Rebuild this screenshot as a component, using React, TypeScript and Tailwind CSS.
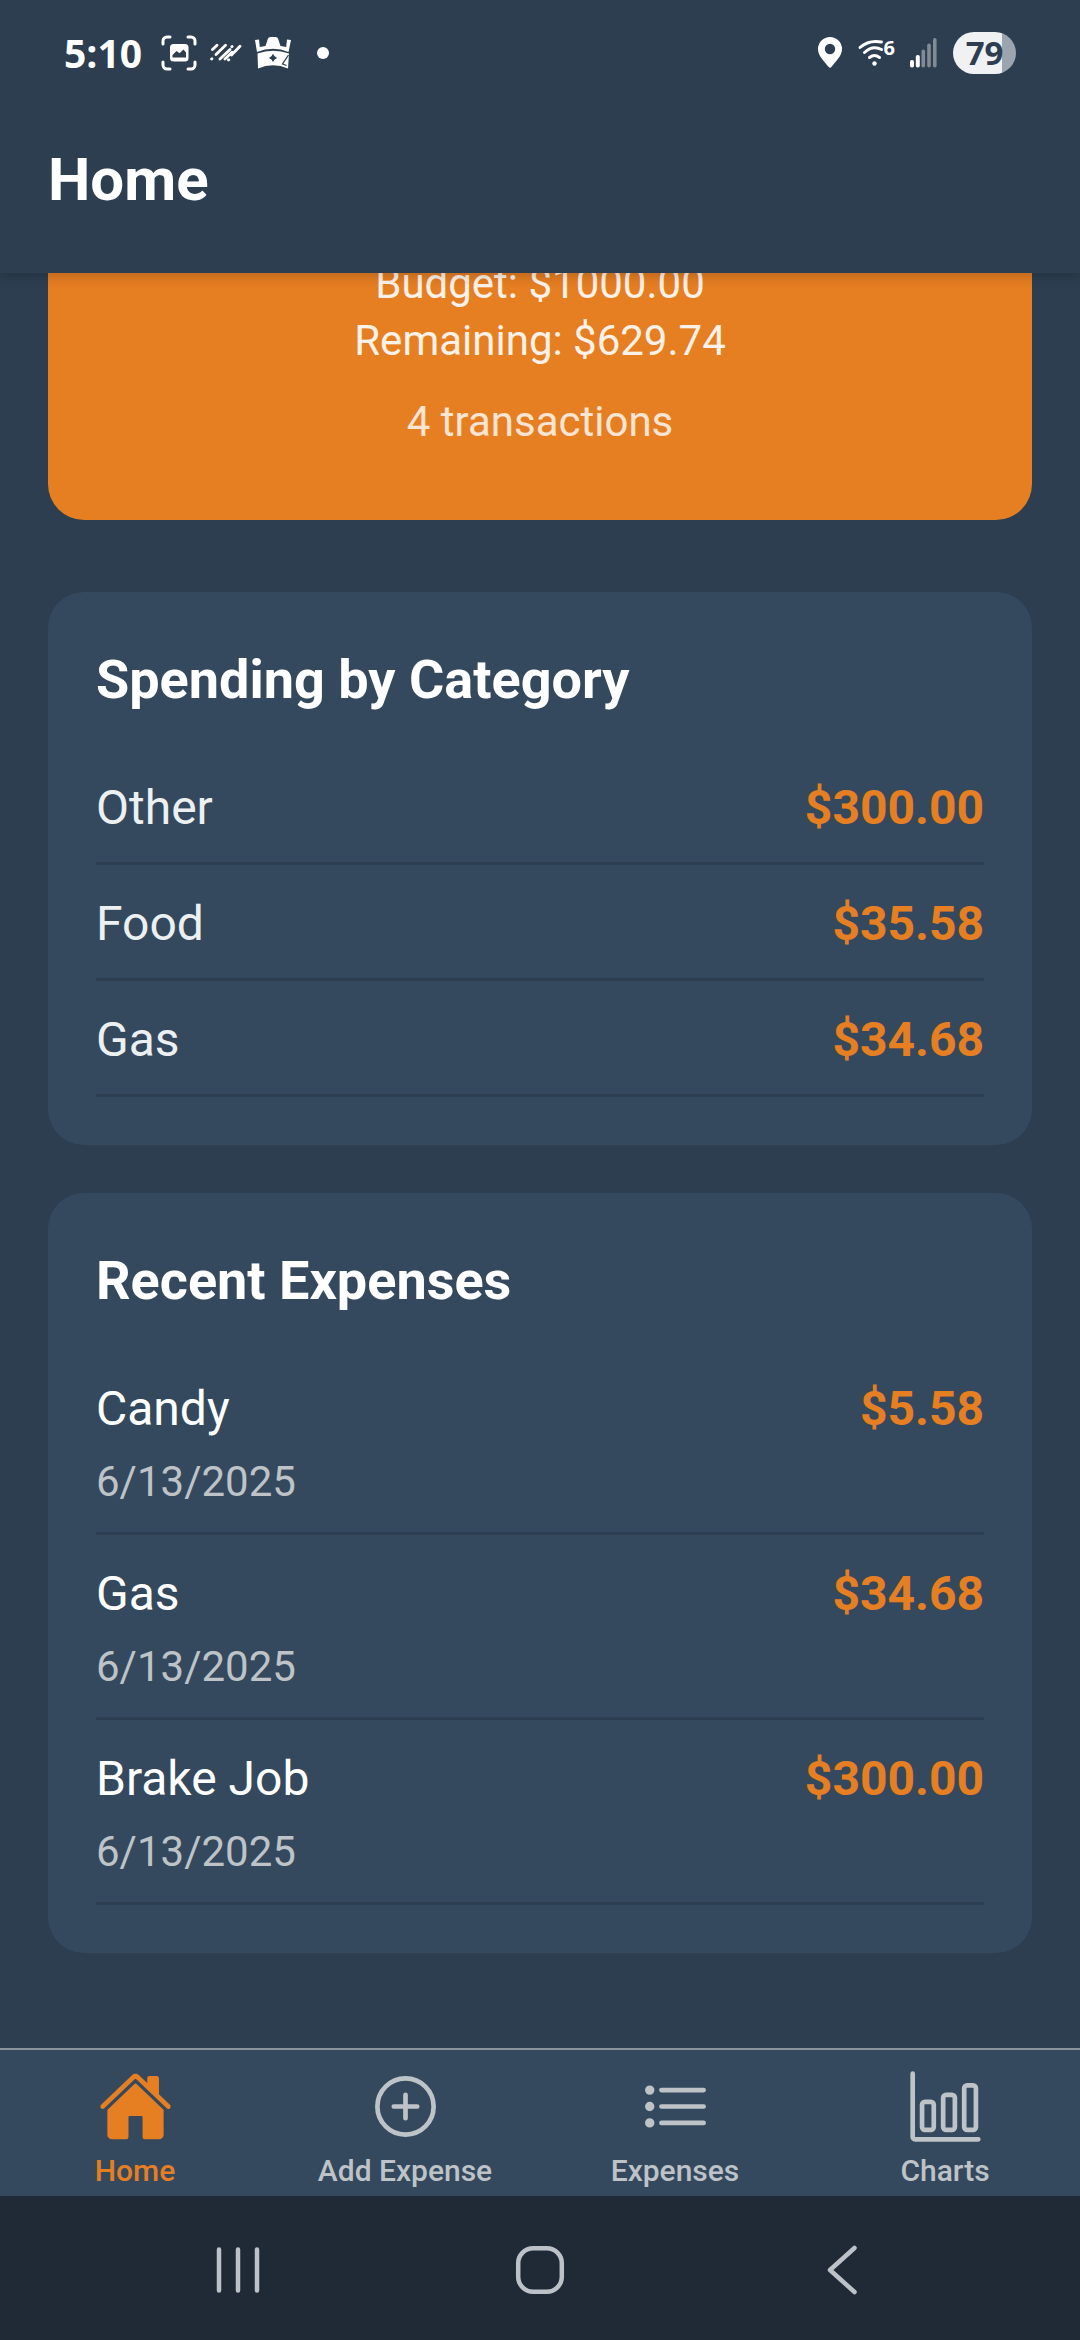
import type { ReactNode } from "react";
import { IoAddCircleOutline, IoBarChartOutline, IoHome, IoListOutline } from "react-icons/io5";

const categories = [
  { name: "Other", amount: "$300.00" },
  { name: "Food", amount: "$35.58" },
  { name: "Gas", amount: "$34.68" },
];

const expenses = [
  { name: "Candy", date: "6/13/2025", amount: "$5.58" },
  { name: "Gas", date: "6/13/2025", amount: "$34.68" },
  { name: "Brake Job", date: "6/13/2025", amount: "$300.00" },
];

const tabs = [
  { label: "Home", Icon: IoHome, active: true },
  { label: "Add Expense", Icon: IoAddCircleOutline, active: false },
  { label: "Expenses", Icon: IoListOutline, active: false },
  { label: "Charts", Icon: IoBarChartOutline, active: false },
];

function CaptureIcon() {
  return (
    <svg width="36" height="36" viewBox="0 0 36 36" fill="none" aria-hidden="true">
      <path
        d="M2 9V6a4 4 0 0 1 4-4h3M27 2h3a4 4 0 0 1 4 4v3M34 27v3a4 4 0 0 1-4 4h-3M9 34H6a4 4 0 0 1-4-4v-3"
        stroke="#fff"
        strokeWidth="3"
        strokeLinecap="round"
      />
      <rect x="9" y="9" width="18.5" height="17.5" rx="3.5" fill="#fff" />
      <path d="M11.5 22.5V20l4-4 3 2.200 4-3.700 2.500 3v5z" fill="#2c3e50" />
    </svg>
  );
}

function StripesIcon() {
  return (
    <svg width="32" height="20" viewBox="0 0 32 20" aria-hidden="true">
      <path
        d="M2.500 6.500L7 2.200M6 11.500L15.500 2.300M1.600 16l.3-.3M10 16L20 6.500M21.800 3.800l.3-.3M15 16l7-6.700M18.500 17l.3-.3M21.500 12L30 3.200"
        stroke="#fff"
        strokeWidth="2.800"
        strokeLinecap="round"
      />
    </svg>
  );
}

function HatIcon() {
  return (
    <svg width="38" height="34" viewBox="0 0 38 34" aria-hidden="true">
      <path
        d="M1 4l4-.5.8 7.500 5.700-1 2.500-7.500Q14.500 1 16.500 1h5q2 0 2.500 1.500l2.500 7.500 5.700 1 .8-7.500 4 .5-2.500 12Q19 9.500 3 16z"
        fill="#fff"
      />
      <path d="M3.500 17.500Q19 12 35 17.500l-1 15Q19 26 4 32.500z" fill="#fff" />
      <path d="M19 18.500l1.200 2 2.200 1.400-2.200 1.400-1.200 2-1.200-2-2.200-1.400 2.200-1.400z" fill="#2c3e50" stroke="#2c3e50" />
      <path d="M34.500 19L28.500 28l4 1.500" stroke="#2c3e50" strokeWidth="1.300" fill="none" />
    </svg>
  );
}

function PinIcon() {
  return (
    <svg width="24" height="31" viewBox="0 0 24 31" aria-hidden="true">
      <path
        fillRule="evenodd"
        fill="#fff"
        d="M12 0a12 12 0 0 0-12 12c0 7 6 12 10.500 17.800a2 2 0 0 0 3 0C18 24 24 19 24 12A12 12 0 0 0 12 0zm0 6.800a5.200 5.200 0 1 1 0 10.400 5.200 5.200 0 0 1 0-10.400z"
      />
    </svg>
  );
}

function WifiIcon() {
  return (
    <svg width="38" height="28" viewBox="0 0 38 28" className="overflow-visible" aria-hidden="true">
      <g fill="none" stroke="#fff" strokeWidth="3" strokeLinecap="round">
        <path d="M2 8.500Q11 .5 23.500 3" />
        <path d="M6.500 13.500Q14.500 6 23.500 10.500" />
        <path d="M11.500 18.500Q16.500 14.500 21.500 18.500" />
      </g>
      <circle cx="16.500" cy="24.500" r="2.200" fill="#fff" />
      <text x="25.500" y="15.500" fill="#fff" className="font-['Open_Sans'] text-[20px] font-bold">
        6
      </text>
    </svg>
  );
}

function SignalIcon() {
  return (
    <svg width="27" height="30" viewBox="0 0 27 30" aria-hidden="true">
      <rect x="0" y="22" width="4" height="7.500" rx="1.800" fill="#fff" />
      <rect x="5.800" y="17" width="4" height="12.500" rx="1.800" fill="#fff" />
      <g fill="#808b96">
        <rect x="11.500" y="11.500" width="3.600" height="18" rx="1.800" />
        <rect x="17.200" y="5.500" width="3.600" height="24" rx="1.800" />
        <rect x="23" y="0" width="3.600" height="29.500" rx="1.800" />
      </g>
    </svg>
  );
}

function StatusBar() {
  return (
    <div className="flex h-[105px] items-center px-16 text-white">
      <span className="font-['Open_Sans'] text-[39px] leading-[48px] font-bold">5:10</span>
      <div className="ml-[19px] flex items-center">
        <CaptureIcon />
        <span className="ml-[13px]">
          <StripesIcon />
        </span>
        <span className="ml-3">
          <HatIcon />
        </span>
        <span className="ml-[25px] size-3 rounded-full bg-white" />
      </div>
      <div className="ml-auto flex items-center">
        <PinIcon />
        <span className="ml-4">
          <WifiIcon />
        </span>
        <span className="ml-[14px]">
          <SignalIcon />
        </span>
        <span className="ml-4 flex h-[42px] w-[63px] items-center justify-center rounded-full bg-linear-to-r from-[#eff1f3] from-78% to-[#9ca5ae] to-78% font-['Open_Sans'] text-[33px] leading-none font-bold text-[#2c3e50]">
          79
        </span>
      </div>
    </div>
  );
}

function Card({ title, children }: { title: string; children: ReactNode }) {
  return (
    <section className="rounded-[36px] bg-[#34495e] p-12">
      <h2 className="mb-[29px] text-[54px] leading-[80px] font-bold text-white">{title}</h2>
      <ul>{children}</ul>
    </section>
  );
}

function Amount({ value }: { value: string }) {
  return <span className="text-[48px] leading-[65px] font-bold text-[#e67e22]">{value}</span>;
}

export default function App() {
  return (
    <div className="flex min-h-screen flex-col bg-[#2c3e50] font-[Roboto,sans-serif]">
      <header className="relative z-10 bg-[#2c3e50] shadow-[0_3px_12px_rgba(0,0,0,0.2)]">
        <StatusBar />
        <div className="flex h-[168px] items-start px-12 pt-10">
          <h1 className="text-[60px] leading-[70px] font-bold text-white">Home</h1>
        </div>
      </header>

      <main className="flex flex-1 flex-col overflow-hidden px-12 pb-[95px]">
        <section className="-mt-[90px] mb-[72px] rounded-[36px] bg-[#e67e22] pt-[72px] pb-[70px] text-center text-[42px] leading-[57px]">
          <p className="text-white/90">Budget: $1000.00</p>
          <p className="text-white/90">Remaining: $629.74</p>
          <p className="mt-6 text-white/80">4 transactions</p>
        </section>

        <div className="flex flex-col gap-12">
          <Card title="Spending by Category">
            {categories.map((c) => (
              <li key={c.name} className="flex justify-between border-b-3 border-[#2c3e50] pt-[26px] pb-[22px]">
                <span className="text-[48px] leading-[65px] text-[#ecf0f1]">{c.name}</span>
                <Amount value={c.amount} />
              </li>
            ))}
          </Card>

          <Card title="Recent Expenses">
            {expenses.map((e) => (
              <li key={e.name} className="flex items-start justify-between border-b-3 border-[#2c3e50] pt-[26px] pb-[22px]">
                <div>
                  <p className="text-[48px] leading-[65px] text-white">{e.name}</p>
                  <p className="mt-3 text-[42px] leading-[57px] text-[#bdc3c7]">{e.date}</p>
                </div>
                <Amount value={e.amount} />
              </li>
            ))}
          </Card>
        </div>
      </main>

      <nav className="grid h-[148px] grid-cols-4 border-t-2 border-[#8b949c] bg-[#34495e]">
        {tabs.map(({ label, Icon, active }) => (
          <a
            key={label}
            href="#"
            aria-current={active ? "page" : undefined}
            className={
              active
                ? "flex flex-col items-center gap-[9px] pt-[19px] text-[#e67e22]"
                : "flex flex-col items-center gap-[9px] pt-[19px] text-[#bdc3c7]"
            }
          >
            <Icon size={75} aria-hidden="true" />
            <span className="text-[30px] leading-9 font-medium">{label}</span>
          </a>
        ))}
      </nav>

      <div className="grid h-36 grid-cols-3 items-center justify-items-center bg-[#1f2a36] px-[87px] pt-1">
        <button type="button" aria-label="Recent apps">
          <svg width="44" height="48" viewBox="0 0 44 48" stroke="#bdc1c8" strokeWidth="4.500" strokeLinecap="round">
            <path d="M3 3.500v41M22 3.500v41M41 3.500v41" />
          </svg>
        </button>
        <button type="button" aria-label="Home screen">
          <svg width="50" height="50" viewBox="0 0 50 50" fill="none" stroke="#bdc1c8" strokeWidth="4.500">
            <rect x="3.200" y="3.200" width="43.600" height="43.600" rx="15" />
          </svg>
        </button>
        <button type="button" aria-label="Back">
          <svg width="30" height="50" viewBox="0 0 30 50" fill="none" stroke="#bdc1c8" strokeWidth="4.500" strokeLinecap="round" strokeLinejoin="round">
            <path d="M27.500 3L3 25l24.500 22" />
          </svg>
        </button>
      </div>
    </div>
  );
}
